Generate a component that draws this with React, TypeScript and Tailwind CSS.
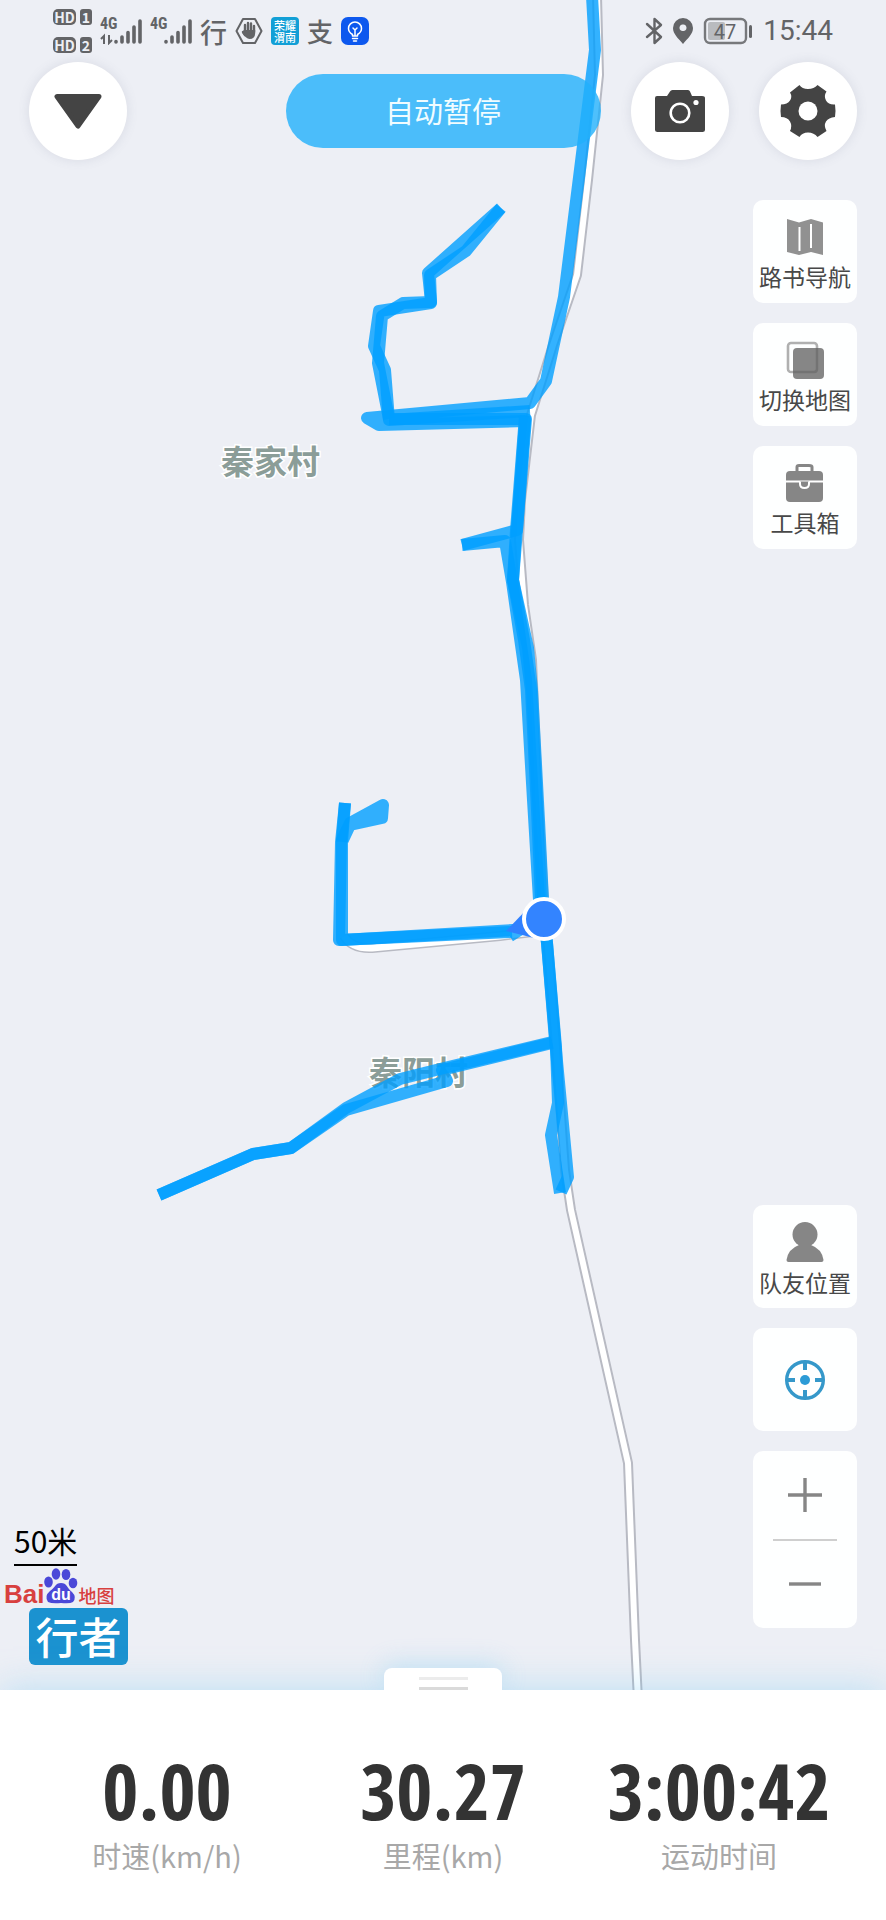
import type { ReactNode } from 'react';

const TRACKS = [
  '592,-4 595,50 564,297 546,381 530,403 367,418 379,425 525,421 517,530 462,545',
  '462,545 505,541 512,582 526,680 533,800 539,900 544,919 547,943 556,1047 558,1103 551,1135 560,1193',
  '389,419 378,363 382,316 403,303 431,302 428,273 501,208',
  '501,208 466,251 430,275 431,303 379,311 374,346 385,370 389,420 530,411',
  '389,419 526,419 517,530 513,580 528,648 532,690 539,820 543,900 547,943 555,1040 568,1177 561,1192',
  '525,416 516,530 513,580 524,640 531,690 537,810 541,900',
  '159,1195 253,1154 291,1148 346,1108 400,1079 440,1069 552,1042',
  '159,1195 253,1154 291,1148 346,1110 447,1081 442,1070 552,1043',
  '345,803 341,842 339,940 512,932',
  '345,803 342,842',
  '518,938 513,930 342,940 342,840 350,823 383,805 382,818 350,825 342,842',
];

const ROAD =
  '597,-4 599,75 588,180 577,275 553,345 531,415 521,500 519,540 524,605 532,660 538,800 544,900 555,1033 565,1170 571,1210 628,1463 635,1640 638,1700';
const LANE = 'M541,931 L500,936 L372,948 Q352,949 344,936';

function MapCanvas() {
  return (
    <svg
      className="absolute inset-0 h-full w-full"
      viewBox="0 0 886 1690"
      preserveAspectRatio="xMidYMin slice"
      aria-hidden="true"
    >
      <g fill="none" strokeLinejoin="round">
        <polyline points={ROAD} stroke="#b8bac3" strokeWidth="10" />
        <path d={LANE} stroke="#b8bac3" strokeWidth="10" />
        <polyline points={ROAD} stroke="#fff" strokeWidth="6" />
        <path d={LANE} stroke="#fff" strokeWidth="7" />
      </g>
      <g
        fill="#8b9d98"
        stroke="#fff"
        strokeWidth="3"
        paintOrder="stroke"
        className="font-['Noto_Sans_CJK_SC',sans-serif] text-[33px] font-bold"
      >
        <text x="221" y="474">秦家村</text>
        <text x="369" y="1085">秦阳村</text>
      </g>
      <g fill="none" stroke="#009fff" strokeOpacity="0.8" strokeWidth="12" strokeLinejoin="round">
        {TRACKS.map((points) => (
          <polyline key={points} points={points} />
        ))}
      </g>
      <path d="M506 931L527 909L534 938Z" fill="#3080ff" />
      <circle cx="544" cy="919" r="20" fill="#3384ff" stroke="#fff" strokeWidth="4" />
    </svg>
  );
}

function SimBadge({ slot }: { slot: string }) {
  return (
    <span className="flex items-center gap-1 text-[14px] leading-none font-bold text-[#edeff5]">
      <span className="flex h-4 w-[23px] items-center justify-center rounded-[5px] bg-[#636467]">HD</span>
      <span className="flex h-4 w-3 items-center justify-center rounded-[3px] bg-[#636467]">{slot}</span>
    </span>
  );
}

function Signal({ arrows }: { arrows?: boolean }) {
  return (
    <svg width="42" height="28" viewBox="0 0 42 28" fill="#636467" aria-hidden="true">
      <text x="0" y="12" className="font-['Roboto_Condensed',sans-serif] text-[16px] font-bold">4G</text>
      {arrows && (
        <path d="M4 27V19L1 22M9 18V26L12 23" fill="none" stroke="#636467" strokeWidth="2" />
      )}
      <g stroke="#636467" strokeWidth="3.600" strokeLinecap="round">
        <path d="M16 24.500V25M22 20V25M28 15.500V25M34 10V25M40 4V25" />
      </g>
    </svg>
  );
}

function StatusBar() {
  return (
    <header className="relative flex h-[62px] items-center justify-between px-[53px] text-[#636467]">
      <div className="flex items-center gap-2">
        <div className="flex flex-col gap-3">
          <SimBadge slot="1" />
          <SimBadge slot="2" />
        </div>
        <Signal arrows />
        <Signal />
        <span className="text-[27px] leading-none font-medium">行</span>
        <svg width="28" height="28" viewBox="0 0 28 28" aria-hidden="true">
          <path d="M8 2H20L26.500 14L20 26H8L1.500 14Z" fill="none" stroke="#636467" strokeWidth="2" strokeLinejoin="round" />
          <path
            d="M10 15V8M13 14V6M16 14V6.500M19 15V9M8 15L10 18"
            fill="none"
            stroke="#636467"
            strokeWidth="2.400"
            strokeLinecap="round"
          />
          <path d="M8.800 13H20.200V16Q20 22 14.500 22Q11 22 7 15.500Z" fill="#636467" />
        </svg>
        <span className="flex size-7 flex-col items-center justify-center rounded bg-[#129fd6] text-[11px] leading-[12px] font-medium text-white">
          <span>荣耀</span>
          <span>渭南</span>
        </span>
        <span className="text-[26px] leading-none font-medium">支</span>
        <svg width="28" height="28" viewBox="0 0 28 28" fill="none" aria-hidden="true">
          <rect width="28" height="28" rx="7" fill="#0d58ee" />
          <path
            d="M11.500 19V17.500Q7.500 15 7.500 11.500A6.500 6.500 0 0 1 20.500 11.500Q20.500 15 16.500 17.500V19ZM14 18V13M12 11L14 13L16 11M11.500 21.500H16.500M12.500 24H15.500"
            stroke="#fff"
            strokeWidth="1.500"
            strokeLinecap="round"
            strokeLinejoin="round"
          />
        </svg>
      </div>
      <div className="flex items-center gap-[10px]">
        <svg width="18" height="28" viewBox="0 0 18 28" fill="none" aria-hidden="true">
          <path
            d="M2 7L16 20L9.500 26V2L16 8L2 20"
            stroke="#636467"
            strokeWidth="2.400"
            strokeLinecap="round"
            strokeLinejoin="round"
          />
        </svg>
        <svg width="20" height="26" viewBox="0 0 20 26" aria-hidden="true">
          <path
            d="M10 0A10 10 0 0 0 0 10C0 16 5 20 10 26C15 20 20 16 20 10A10 10 0 0 0 10 0ZM10 6.500A3 3.300 0 1 1 10 13A3 3.300 0 1 1 10 6.500Z"
            fill="#636467"
            fillRule="evenodd"
          />
        </svg>
        <svg width="50" height="28" viewBox="0 0 50 28" aria-hidden="true">
          <rect x="2" y="2" width="41" height="24" rx="5" fill="none" stroke="#77787b" strokeWidth="2.400" />
          <rect x="5" y="5" width="17" height="18" rx="2" fill="#b9bbbf" />
          <rect x="46" y="8" width="3" height="13" rx="1.500" fill="#636467" />
          <text x="22" y="21.500" textAnchor="middle" fill="#636467" className="font-[Roboto,sans-serif] text-[20px]">
            47
          </text>
        </svg>
        <time className="font-[Roboto,sans-serif] text-[28px] leading-8">15:44</time>
      </div>
    </header>
  );
}

function RoundButton({ label, children }: { label: string; children: ReactNode }) {
  return (
    <button
      type="button"
      aria-label={label}
      className="flex size-[98px] items-center justify-center rounded-full bg-white shadow-[0_0_12px_rgba(90,100,130,0.14)]"
    >
      {children}
    </button>
  );
}

function TopControls() {
  return (
    <nav className="relative grid grid-cols-[1fr_auto_1fr] items-center px-[29px]">
      <RoundButton label="收起">
        <svg width="50" height="36" viewBox="0 0 50 36" aria-hidden="true">
          <path d="M4 3.500H46L25 33Z" fill="#444" stroke="#444" strokeWidth="5" strokeLinejoin="round" />
        </svg>
      </RoundButton>
      <button type="button" className="h-[74px] w-[315px] rounded-full bg-[#22b0fb]/80 text-[29px] text-[#f0fcff]">
        自动暂停
      </button>
      <div className="flex justify-end gap-[30px]">
        <RoundButton label="拍照">
          <svg width="50" height="42" viewBox="0 0 50 42" aria-hidden="true">
            <path
              d="M2 6H12L15 1.500Q15.700 0 17.500 0H33Q34.500 0 35 1.500L37 6H47Q50 6 50 8V40Q50 42 47.500 42H2.500Q0 42 0 40V8Q0 6 2 6Z"
              fill="#444"
            />
            <circle cx="25" cy="23" r="9.300" fill="none" stroke="#fff" strokeWidth="2.600" />
            <circle cx="41" cy="12.500" r="2.600" fill="#fff" />
          </svg>
        </RoundButton>
        <RoundButton label="设置">
          <svg width="56" height="54" viewBox="0 0 56 54" aria-hidden="true">
            <path
              d="M10 8.500L19.500 1Q22 5 28 5T37.500 1L46.500 7.500Q43.500 12 46 16.500T55 20.500Q56 27 55 33Q48.500 33.500 46 37.500T46.500 47L37.500 53Q34 48.500 28 48.500T19.500 53L10 47Q12.500 42 10 37.500T1 33Q0 27 1 20.500Q7.500 20.500 10 16.500T10 8.500Z"
              fill="#444"
            />
            <circle cx="28" cy="27" r="9.500" fill="#fff" />
          </svg>
        </RoundButton>
      </div>
    </nav>
  );
}

function ToolCard({ label, children }: { label: string; children: ReactNode }) {
  return (
    <button
      type="button"
      className="flex h-[103px] w-full flex-col items-center justify-center gap-[6px] rounded-[10px] bg-white/95 pt-1 text-[23px] leading-7 text-[#484848]"
    >
      {children}
      <span>{label}</span>
    </button>
  );
}

function SideTools() {
  return (
    <aside className="flex w-[104px] flex-col gap-5 pb-[62px]">
      <ToolCard label="路书导航">
        <svg width="38" height="38" viewBox="0 0 38 38" aria-hidden="true">
          <path d="M1 1L13 4.500L25 1L37 4.500V37L25 34L13 37L1 34Z" fill="#919191" />
          <path d="M13.500 9V33M25 6V30" stroke="#fff" strokeWidth="2" />
        </svg>
      </ToolCard>
      <ToolCard label="切换地图">
        <svg width="38" height="38" viewBox="0 0 38 38" aria-hidden="true">
          <rect x="2" y="2" width="29" height="29" rx="3" fill="none" stroke="#b0b0b0" strokeWidth="2.600" />
          <rect x="7" y="7" width="31" height="31" rx="4" fill="#868686" />
          <path d="M31 7V28Q31 31 28 31H7" fill="none" stroke="#737373" strokeWidth="2.400" />
        </svg>
      </ToolCard>
      <ToolCard label="工具箱">
        <svg width="38" height="38" viewBox="0 0 38 38" aria-hidden="true">
          <path d="M11 8V3Q11 1.500 13 1.500H23Q26 1.500 26 3V8" fill="none" stroke="#868686" strokeWidth="3" />
          <rect y="7" width="37" height="31" rx="4" fill="#868686" />
          <path d="M0 17.500H37" stroke="#fff" strokeWidth="2" />
          <path d="M14 17.500V20Q14 24 18.500 24T23 20V17.500" fill="#868686" stroke="#fff" strokeWidth="2" />
        </svg>
      </ToolCard>

      <div className="mt-auto" />

      <ToolCard label="队友位置">
        <svg width="38" height="40" viewBox="0 0 38 40" aria-hidden="true">
          <circle cx="19" cy="12.500" r="12.500" fill="#868686" />
          <path d="M13 23H25Q36 27 37.500 38Q37.500 40 35.500 40H2.500Q0.500 40 0.500 38Q2 27 13 23Z" fill="#868686" />
        </svg>
      </ToolCard>
      <button
        type="button"
        aria-label="定位"
        className="flex h-[103px] items-center justify-center rounded-[10px] bg-white/95"
      >
        <svg width="40" height="40" viewBox="0 0 40 40" fill="none" stroke="#3598ca" aria-hidden="true">
          <circle cx="20" cy="20" r="18.300" strokeWidth="3.400" />
          <path d="M20 2V10M20 30V38M2 20H10M30 20H38" strokeWidth="4" />
          <circle cx="20" cy="20" r="5" fill="#2c9bd6" stroke="none" />
        </svg>
      </button>
      <div className="flex h-[177px] flex-col items-center rounded-[10px] bg-white/95">
        <button type="button" aria-label="放大" className="flex w-full flex-1 items-center justify-center">
          <svg width="34" height="34" viewBox="0 0 34 34" stroke="#868686" strokeWidth="3.400" aria-hidden="true">
            <path d="M17 0V34M0 17H34" />
          </svg>
        </button>
        <div className="h-0.5 w-16 bg-[#cfcfcf]" />
        <button type="button" aria-label="缩小" className="flex w-full flex-1 items-center justify-center">
          <svg width="34" height="34" viewBox="0 0 34 34" stroke="#868686" strokeWidth="3.400" aria-hidden="true">
            <path d="M1 17H33" />
          </svg>
        </button>
      </div>
    </aside>
  );
}

function MapCredits() {
  return (
    <div className="flex flex-col items-start justify-end pb-[25px]">
      <div className="ml-[14px] border-b-2 border-black pb-1 text-[30px] leading-10 text-black">50米</div>
      <div className="ml-1 flex h-[42px] items-end pb-1 leading-none font-bold text-[#d8403f]">
        <span className="font-['Liberation_Sans',sans-serif] text-[26px] leading-5">Bai</span>
        <svg width="34" height="36" viewBox="0 0 34 36" fill="#4a48d8" aria-hidden="true">
          <ellipse cx="4.500" cy="14" rx="4.300" ry="5.500" />
          <ellipse cx="12" cy="6" rx="4.300" ry="5.700" />
          <ellipse cx="22" cy="6.500" rx="4.300" ry="5.500" />
          <ellipse cx="29" cy="15" rx="4.300" ry="5.300" />
          <path d="M17 15C23 15 23 20 28 24Q33 29 29 34Q26 36 17 35Q8 36 4 34Q0 28 6 23C11 20 11 15 17 15Z" />
          <text
            x="17"
            y="32"
            textAnchor="middle"
            fill="#fff"
            className="font-['Liberation_Sans',sans-serif] text-[16px] font-bold"
          >
            du
          </text>
        </svg>
        <span className="text-[18px] font-medium">地图</span>
      </div>
      <div className="ml-[29px] flex h-[57px] w-[99px] items-center justify-center rounded-md bg-[#1b92d0] pb-0.5 text-[43px] leading-none font-medium text-white">
        行者
      </div>
    </div>
  );
}

const STATS = [
  { value: '0.00', label: '时速(km/h)' },
  { value: '30.27', label: '里程(km)' },
  { value: '3:00:42', label: '运动时间' },
];

function StatsPanel() {
  return (
    <footer className="relative bg-white px-[29px] pt-[56px] pb-[45px] shadow-[0_0_36px_rgba(110,200,245,0.4)]">
      <button
        type="button"
        aria-label="展开"
        className="absolute bottom-full left-1/2 flex h-[22px] w-[118px] -translate-x-1/2 flex-col items-center justify-end gap-[7px] rounded-t-lg bg-white shadow-[0_-4px_24px_rgba(110,200,245,0.3)] [clip-path:inset(-40px_-40px_0_-40px)]"
      >
        <span className="h-[3px] w-[49px] bg-[#ececec]" />
        <span className="h-[3px] w-[49px] bg-[#dadada]" />
      </button>
      <dl className="grid grid-cols-3 text-center">
        {STATS.map(({ value, label }) => (
          <div key={label} className="flex flex-col-reverse">
            <dt className="text-[29px] leading-10 text-[#a8a8a8]">{label}</dt>
            <dd className="pb-px font-['Open_Sans_Condensed','Roboto_Condensed',sans-serif] text-[78px] leading-[88px] font-bold text-[#333]">
              {value}
            </dd>
          </div>
        ))}
      </dl>
    </footer>
  );
}

export default function App() {
  return (
    <main className="flex min-h-screen flex-col bg-[#edeff5] font-['Noto_Sans_CJK_SC',sans-serif]">
      <section className="relative flex flex-1 flex-col">
        <MapCanvas />
        <StatusBar />
        <TopControls />
        <div className="relative flex flex-1 justify-between pt-10 pr-[29px]">
          <MapCredits />
          <SideTools />
        </div>
      </section>
      <StatsPanel />
    </main>
  );
}
